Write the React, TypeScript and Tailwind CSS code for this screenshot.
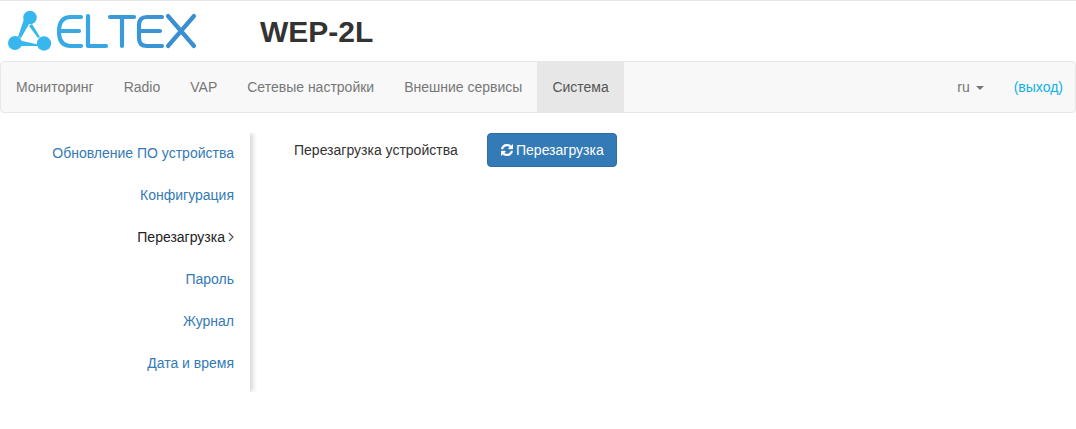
const sideItems = [
  { label: 'Обновление ПО устройства' },
  { label: 'Конфигурация' },
  { label: 'Перезагрузка', active: true },
  { label: 'Пароль' },
  { label: 'Журнал' },
  { label: 'Дата и время' },
];

const navItems = ['Мониторинг', 'Radio', 'VAP', 'Сетевые настройки', 'Внешние сервисы'];

function Logo() {
  return (
    <svg width="200" height="60" viewBox="0 1 200 60" fill="none">
      <g fill="#38b6ee">
        <circle cx="30" cy="17.5" r="6.8" />
        <circle cx="15" cy="43" r="7" />
        <circle cx="44" cy="43.500" r="7.2" />
        <path d="M24 19 L18 37 L21 38 L29 24 Z" />
        <path d="M32 24 L40 37 L38 38 L29 26 Z" />
        <path d="M20 40.500 L38 44.500 L38 46 L20 46 Z" />
      </g>
      <g strokeWidth="4.2" fill="none" strokeLinecap="round" strokeLinejoin="round">
        <path d="M81 17 H71 Q59 17 59 31.500 Q59 46 71 46 H81 M60 31 H79" stroke="#38a9e4" />
        <path d="M88 16 V46 H106" stroke="#38a6e2" />
        <path d="M110 17 H134 M122 17 V46" stroke="#3a9ad9" />
        <path d="M162 17 H147 Q139 17 139 25 V38 Q139 46 147 46 H162 M140 31 H160" stroke="#3a94d5" />
        <path d="M168 16 L194 46 M194 16 L168 46" stroke="#3a8fd2" />
      </g>
    </svg>
  );
}

export default function App() {
  return (
    <div className="min-h-[429px] bg-white text-sm text-[#333] font-['Liberation_Sans',Arial,sans-serif]">
      <div className="flex h-[61px] items-center border-t border-[#e7e7e7]">
        <div className="w-[260px]">
          <Logo />
        </div>
        <h1 className="text-[30px] font-bold leading-[33px] text-[#333]">WEP-2L</h1>
      </div>

      <nav className="flex h-[52px] items-stretch rounded-[4px] border border-[#e7e7e7] bg-[#f8f8f8]">
        {navItems.map((item) => (
          <a key={item} className="flex items-center px-[15px] text-[#777]">{item}</a>
        ))}
        <a className="flex items-center bg-[#e7e7e7] px-[15px] text-[#555]">Система</a>
        <div className="ml-auto flex items-center text-[#777]">
          <a className="flex items-center gap-[6px] px-[15px]">
            ru
            <span className="mt-[2px] border-x-[4px] border-t-[4px] border-x-transparent border-t-[#777]"></span>
          </a>
          <a className="pl-[15px] pr-[12px] text-[#0fb0e6]">(выход)</a>
        </div>
      </nav>

      <div className="flex pt-[20px]">
        <ul className="flex h-[259px] w-[250px] flex-col shadow-[3px_0_5px_rgba(0,0,0,0.16)] [clip-path:inset(0_-10px_0_0)]">
          {sideItems.map((item) => (
            <li key={item.label} className="flex h-[42px] shrink-0 items-center justify-end pb-[2px] pr-[16px]">
              {item.active ? (
                <span className="flex items-center gap-[3px] text-[#222]">
                  {item.label}
                  <svg width="6" height="10" viewBox="0 0 6 10" fill="none" stroke="#555" strokeWidth="1.2">
                    <path d="M1 1 L5 5 L1 9" />
                  </svg>
                </span>
              ) : (
                <a className="text-[#337ab7]">{item.label}</a>
              )}
            </li>
          ))}
        </ul>

        <div className="flex items-start pl-[44px]">
          <span className="mt-[7px] w-[193px] text-[#333]">Перезагрузка устройства</span>
          <button className="flex h-[34px] items-center gap-[3px] rounded-[4px] border border-[#2e6da4] bg-[#337ab7] px-[12px] text-white">
            <svg className="ml-[1px]" width="12" height="12" viewBox="0 0 1536 1536" fill="currentColor" stroke="currentColor" strokeWidth="50">
              <path d="M1511 928q0 5-1 7-64 268-268 434.500t-478 166.500q-146 0-282.500-55t-243.500-157l-129 129q-19 19-45 19t-45-19-19-45v-448q0-26 19-45t45-19h448q26 0 45 19t19 45-19 45l-137 137q71 66 161 102t187 36q134 0 250-65t186-179q11-17 53-117 8-23 30-23h192q13 0 22.500 9.500t9.500 22.500zm25-800v448q0 26-19 45t-45 19h-448q-26 0-45-19t-19-45 19-45l138-138q-148-137-349-137-134 0-250 65t-186 179q-11 17-53 117-8 23-30 23h-199q-13 0-22.500-9.500t-9.500-22.500v-7q65-268 270-434.500t480-166.500q146 0 284 55.500t245 156.500l130-129q19-19 45-19t45 19 19 45z" />
            </svg>
            Перезагрузка
          </button>
        </div>
      </div>
    </div>
  );
}
